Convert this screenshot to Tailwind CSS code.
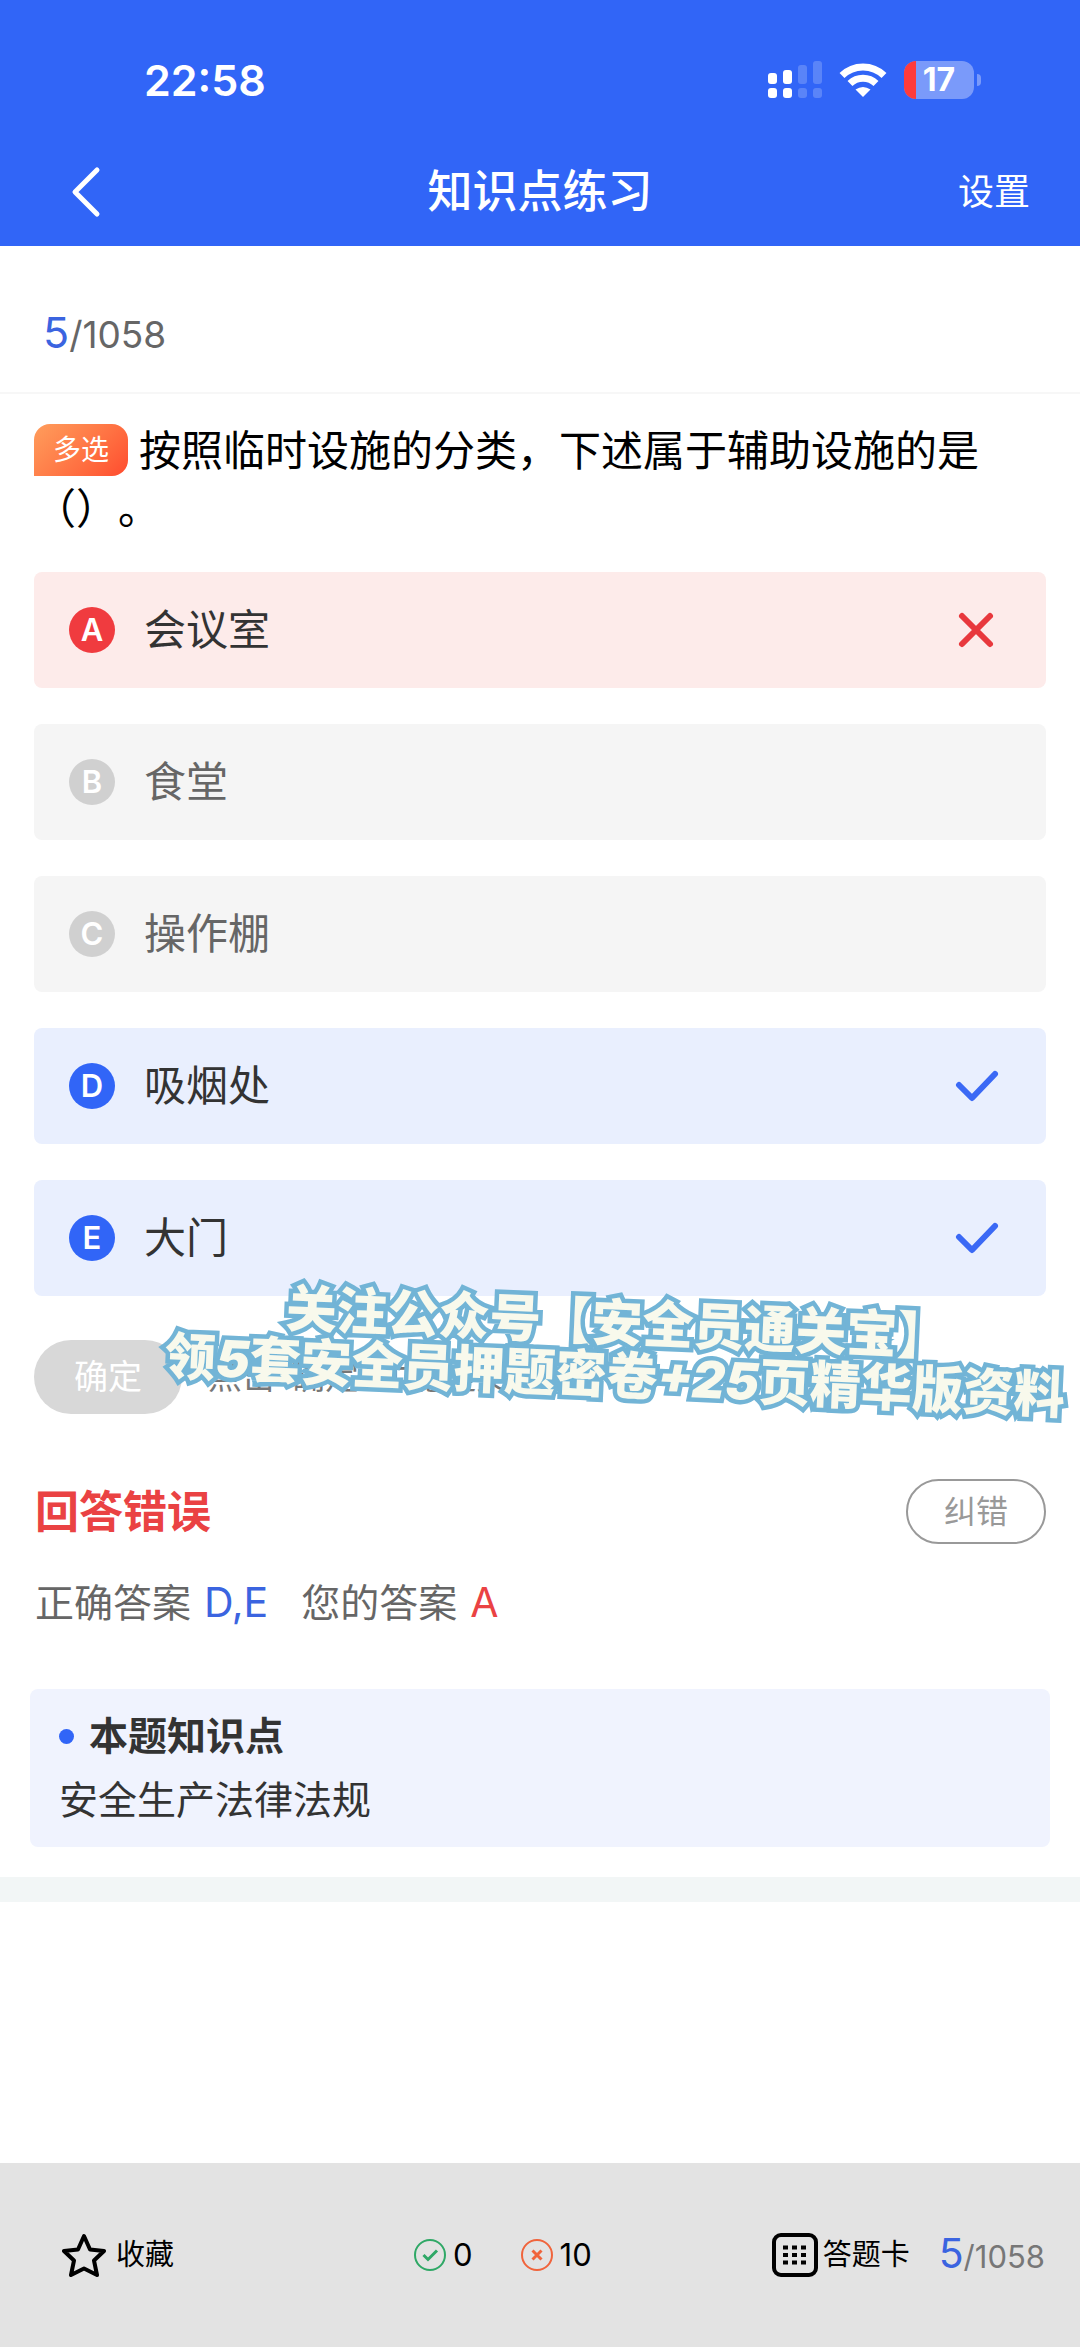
<!DOCTYPE html>
<html lang="zh-CN">

<head>
  <meta charset="UTF-8" />
  <meta name="viewport" content="width=device-width, initial-scale=1.0" />
  <title>知识点练习</title>
  <script src="https://cdn.jsdelivr.net/npm/@tailwindcss/browser@4"></script>
</head>

<body class="bg-white font-[Inter,'Noto_Sans_CJK_SC',sans-serif] text-[#333333]">
  <div class="min-h-screen flex flex-col">
    <!-- header -->
    <header class="bg-[#3165f7] text-white h-[246px] flex flex-col">
      <div class="h-[136px] pt-6 pl-[144px] pr-[99px] flex items-center justify-between">
        <div class="text-[43px] leading-[48px] font-semibold">22:58</div>
        <div class="flex items-center">
          <svg class="w-[54px] h-[38px] mr-[17px]" viewBox="0 0 54 38" fill="#fff">
            <rect x="0" y="12" width="9" height="11" rx="3" />
            <rect x="15" y="9" width="9" height="14" rx="3" />
            <rect x="0" y="27" width="9" height="10" rx="3" />
            <rect x="15" y="27" width="9" height="10" rx="3" />
            <g opacity=".2">
              <rect x="30" y="4" width="9" height="19" rx="3" />
              <rect x="45" y="0" width="9" height="23" rx="3" />
              <rect x="30" y="27" width="9" height="10" rx="3" />
              <rect x="45" y="27" width="9" height="10" rx="3" />
            </g>
          </svg>
          <svg class="w-[48px] h-[36px] mr-[17px]" viewBox="0 0 48 36" fill="none" stroke="#fff" stroke-width="7">
            <path d="M3 13.500A30 30 0 0 1 45 13.500" />
            <path d="M11 21.500A18.500 18.500 0 0 1 37 21.500" />
            <path d="M24 35L16.500 27.500Q24 22.500 31.500 27.500Z" fill="#fff" stroke="none" />
          </svg>
          <div class="relative w-[70px] h-[38px] rounded-[12px] overflow-hidden bg-[#7a9afa] flex items-center justify-center">
            <div class="absolute left-0 top-0 h-full w-[12px] bg-[#ff3b3b]"></div>
            <span class="text-[32px] leading-[38px] font-bold">17</span>
          </div>
          <div class="w-[4px] h-[12px] ml-[3px] rounded-r-full bg-[#7a9afa]"></div>
        </div>
      </div>
      <div class="h-[110px] pt-[2px] px-[50px] grid grid-cols-3 items-center">
        <button type="button" aria-label="返回" class="pl-[20px] justify-self-start">
          <svg class="w-[32px] h-[52px]" viewBox="0 0 32 52" fill="none" stroke="#fff" stroke-width="5" stroke-linecap="round" stroke-linejoin="round">
            <path d="M27 4L5 26L27 48" />
          </svg>
        </button>
        <h1 class="text-[45px] leading-[60px] font-medium text-center">知识点练习</h1>
        <a href="#" class="text-[36px] leading-[48px] justify-self-end">设置</a>
      </div>
    </header>

    <main class="flex-1">
      <div class="h-[148px] pt-7 px-[43px] flex items-center border-b-2 border-[#f7f7f7] text-[#666666]">
        <span class="text-[37px] leading-[52px]"><span class="text-[43px] text-[#3b64e0]">5</span>/1058</span>
      </div>

      <section class="px-[34px] pt-[28px]">
        <p class="text-[42px] leading-[58px] text-black [text-spacing-trim:space-all]">
          <span class="inline-block align-[6px] w-[94px] h-[52px] mr-[11px] rounded-[16px] rounded-bl-none bg-linear-135 from-[#ff9d5c] to-[#ff4a2e] text-white text-[28px] leading-[52px] text-center">多选</span>按照临时设施的分类，下述属于辅助设施的是（）。
        </p>

        <!-- options -->
        <div class="mt-[34px] flex flex-col gap-[36px]">
          <button type="button" class="h-[116px] rounded-lg px-[35px] flex items-center text-left bg-[#fdebea]">
            <span class="size-[46px] rounded-full bg-[#f03b3f] text-white text-[31px] leading-[46px] font-semibold text-center">A</span>
            <span class="ml-[29px] flex-1 text-[42px] leading-[60px]">会议室</span>
            <svg class="size-[46px] mr-[12px]" viewBox="0 0 46 46" fill="none" stroke="#e8383d" stroke-width="6" stroke-linecap="round">
              <path d="M9 9L37 37M37 9L9 37" />
            </svg>
          </button>
          <button type="button" class="h-[116px] rounded-lg px-[35px] flex items-center text-left bg-[#f5f5f5] text-[#666666]">
            <span class="size-[46px] rounded-full bg-[#d0d0d0] text-white text-[31px] leading-[46px] font-semibold text-center">B</span>
            <span class="ml-[29px] flex-1 text-[42px] leading-[60px]">食堂</span>
          </button>
          <button type="button" class="h-[116px] rounded-lg px-[35px] flex items-center text-left bg-[#f5f5f5] text-[#666666]">
            <span class="size-[46px] rounded-full bg-[#d0d0d0] text-white text-[31px] leading-[46px] font-semibold text-center">C</span>
            <span class="ml-[29px] flex-1 text-[42px] leading-[60px]">操作棚</span>
          </button>
          <button type="button" class="h-[116px] rounded-lg px-[35px] flex items-center text-left bg-[#e9effe]">
            <span class="size-[46px] rounded-full bg-[#3165f7] text-white text-[31px] leading-[46px] font-semibold text-center">D</span>
            <span class="ml-[29px] flex-1 text-[42px] leading-[60px]">吸烟处</span>
            <svg class="size-[46px] mr-[12px]" viewBox="0 0 46 46" fill="none" stroke="#3b69f5" stroke-width="6" stroke-linecap="round" stroke-linejoin="round">
              <path d="M6 22L19 35L42 11" />
            </svg>
          </button>
          <button type="button" class="h-[116px] rounded-lg px-[35px] flex items-center text-left bg-[#e9effe]">
            <span class="size-[46px] rounded-full bg-[#3165f7] text-white text-[31px] leading-[46px] font-semibold text-center">E</span>
            <span class="ml-[29px] flex-1 text-[42px] leading-[60px]">大门</span>
            <svg class="size-[46px] mr-[12px]" viewBox="0 0 46 46" fill="none" stroke="#3b69f5" stroke-width="6" stroke-linecap="round" stroke-linejoin="round">
              <path d="M6 22L19 35L42 11" />
            </svg>
          </button>
        </div>
      </section>

      <!-- confirm row, promo text lies over it -->
      <section class="relative mt-[44px] px-[34px] flex items-center">
        <button type="button" class="w-[148px] h-[74px] rounded-full bg-[#d8d8d8] text-white text-[34px] leading-[48px]">确定</button>
        <span class="ml-[26px] text-[34px] leading-[48px] text-[#777777]">点击“确定”才能提交</span>
        <div class="absolute left-[152px] right-0 -top-[44px] rotate-[2.5deg] text-center whitespace-nowrap [font-style:oblique_10deg] font-black text-[51px] leading-[53px] text-[#f8f9ec] [-webkit-text-stroke:9px_#72b4d6] [paint-order:stroke_fill] [text-spacing-trim:space-all]">
          <div>关注公众号【安全员通关宝】</div>
          <div>领5套安全员押题密卷+25页精华版资料</div>
        </div>
      </section>

      <!-- result -->
      <section class="pl-[35px] pr-[34px] pt-[65px]">
        <div class="flex items-center justify-between">
          <h2 class="text-[44px] leading-[64px] font-bold text-[#ea4243]">回答错误</h2>
          <button type="button" class="w-[140px] h-[65px] rounded-full border-2 border-[#999999] text-[#999999] text-[32px] leading-[48px]">纠错</button>
        </div>
        <p class="mt-[30px] text-[39px] leading-[56px] text-[#666666]">
          <span>正确答案 <span class="ml-[2px] text-[41px] text-[#3b64e0]">D,E</span></span>
          <span class="ml-[22px]">您的答案 <span class="ml-[2px] text-[41px] text-[#ea4243]">A</span></span>
        </p>
      </section>

      <section class="mx-[30px] mt-[58px] rounded-lg bg-[#f0f3fe] px-[29px] py-[15px]">
        <h3 class="flex items-center text-[39px] leading-[64px] font-bold">
          <span class="size-[15px] rounded-full bg-[#3165f7] mr-[15px]"></span>本题知识点
        </h3>
        <p class="text-[39px] leading-[64px]">安全生产法律法规</p>
      </section>

      <div class="mt-[30px] h-[25px] bg-[#f2f6f6]"></div>
    </main>

    <footer class="h-[184px] bg-[#e3e3e3] px-[35px] flex items-center justify-between text-black text-[29px] leading-[40px]">
      <button type="button" class="pl-[27px] flex items-center">
        <svg class="w-[44px] h-[44px] mr-[10px]" viewBox="0 0 44 44" fill="none" stroke="#000" stroke-width="4" stroke-linejoin="round">
          <path d="M22 3L28 16.500L42 18L32 27.500L35 42L22 35.500L9 42L12 27.500L2 18L16 16.500Z" />
        </svg>
        收藏
      </button>
      <div class="ml-[60px] flex items-center text-[31px]">
        <svg class="size-[32px] mr-[7px]" viewBox="0 0 32 32" fill="none" stroke="#2fa866" stroke-width="2">
          <circle cx="16" cy="16" r="15" />
          <path d="M9.500 16L14 20.500L23 11.500" stroke-width="3" />
        </svg>
        <span>0</span>
        <svg class="size-[32px] ml-[48px] mr-[7px]" viewBox="0 0 32 32" fill="none" stroke="#f0643c" stroke-width="2">
          <circle cx="16" cy="16" r="15" />
          <path d="M11.500 11.500L20.500 20.500M20.500 11.500L11.500 20.500" stroke-width="3" />
        </svg>
        <span>10</span>
      </div>
      <div class="flex items-center">
        <button type="button" class="flex items-center">
          <svg class="w-[46px] h-[44px] mr-[5px]" viewBox="0 0 46 44" fill="none" stroke="#000">
            <rect x="2" y="2" width="42" height="40" rx="7" stroke-width="4" />
            <path d="M11 14.500H35M11 22H35M11 29.500H35" stroke-width="4" stroke-dasharray="5 4" />
          </svg>
          答题卡
        </button>
        <span class="ml-[29px] text-[31px] text-[#777777]"><span class="text-[41px] text-[#3b64e0]">5</span>/1058</span>
      </div>
    </footer>
  </div>
</body>

</html>
